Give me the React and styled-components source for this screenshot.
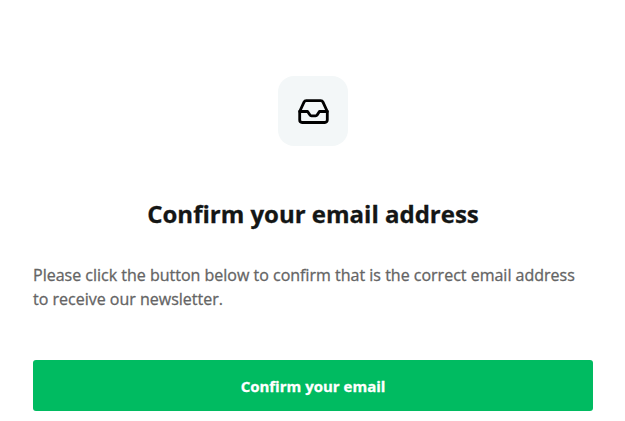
import React from "react";
import styled, { createGlobalStyle } from "styled-components";

const GlobalStyle = createGlobalStyle`
  * { box-sizing: border-box; }
  body { margin: 0; background: #fff; font-family: "Open Sans", sans-serif; }
`;
const Page = styled.main`
  display: flex;
  flex-direction: column;
  align-items: center;
  height: 421px;
  padding: 76px 32px 0 33px;
  overflow: hidden;
`;
const IconTile = styled.div`
  display: grid;
  place-items: center;
  width: 70px;
  height: 70px;
  border-radius: 16px;
  background: #f3f7f8;
`;
const InboxIcon = styled.svg`
  width: 32px;
  height: 32px;
  fill: none;
  stroke: #000;
  stroke-width: 2.8;
  stroke-linecap: round;
  stroke-linejoin: round;
`;
const Title = styled.h1`
  margin: 52px 0 0;
  font-size: 24px;
  line-height: 32px;
  font-weight: 700;
  color: #141615;
  -webkit-text-stroke: 0.3px currentColor;
  white-space: nowrap;
`;
const Message = styled.p`
  width: 560px;
  margin: 33px 0 0;
  font-size: 16px;
  line-height: 24px;
  color: #646464;
  -webkit-text-stroke: 0.3px currentColor;
  white-space: nowrap;
`;
const ConfirmButton = styled.button`
  width: 560px;
  height: 51px;
  margin: 49px 0 0;
  padding: 0;
  border: 0;
  border-radius: 3px;
  background: #00bb61;
  color: #fff;
  font: 700 15px/24px "Open Sans", sans-serif;
  -webkit-text-stroke: 0.3px currentColor;
`;

export default function App() {
  return (
    <Page>
      <GlobalStyle />
      <IconTile>
        <InboxIcon viewBox="0 0 32 32">
          <path d="M2.7 16.5H10.6l2 3.1q.8 1.2 1.8 1.2h4.2q1 0 1.8-1.2l2-3.1h7.9" />
          <path d="M2.7 16.5v8.6a2.4 2.4 0 0 0 2.4 2.4h22.8a2.4 2.4 0 0 0 2.4-2.4v-8.6L26 7.1q-.7-1.4-2.3-1.4H9.3Q7.7 5.7 7 7.1L2.7 16.5" />
        </InboxIcon>
      </IconTile>
      <Title>Confirm your email address</Title>
      <Message>
        Please click the button below to confirm that is the correct email address
        <br />
        to receive our newsletter.
      </Message>
      <ConfirmButton type="button">Confirm your email</ConfirmButton>
    </Page>
  );
}
